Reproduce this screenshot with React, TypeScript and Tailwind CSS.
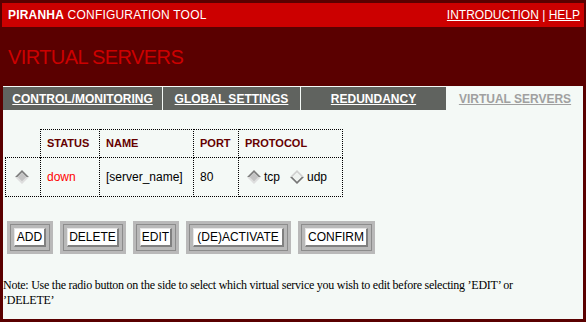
import React from "react";

type DiamondProps = { on?: boolean };

function Diamond({ on = false }: DiamondProps) {
  const top = on ? "#7c7c7c" : "#cfcfcf";
  const bottom = on ? "#dedede" : "#767676";
  const fill = on ? "#c4c4c4" : "#eef2ef";
  return (
    <svg width="14" height="14" viewBox="0 0 14 14" className="shrink-0">
      <polygon points="7,0 14,7 11.5,7 7,2.5 2.5,7 0,7" fill={top} />
      <polygon points="0,7 2.5,7 7,11.5 11.5,7 14,7 7,14" fill={bottom} />
      <polygon points="7,2.5 11.5,7 7,11.5 2.5,7" fill={fill} />
    </svg>
  );
}

const tabs = [
  { label: "CONTROL/MONITORING", w: "w-[159px]" },
  { label: "GLOBAL SETTINGS", w: "w-[137px]" },
  { label: "REDUNDANCY", w: "w-[145px]" },
];

const buttons = [
  { label: "ADD", w: "w-[46px]" },
  { label: "DELETE", w: "w-[66px]" },
  { label: "EDIT", w: "w-[46px]" },
  { label: "(DE)ACTIVATE", w: "w-[105px]" },
  { label: "CONFIRM", w: "w-[77px]" },
];

const cell = "border border-dotted border-black";

export default function App() {
  return (
    <div className="w-[586px] h-[322px] overflow-hidden bg-[#5a0000] pt-[3px] px-[2px] font-['Liberation_Sans',Arial,sans-serif]">
      <div className="h-[24px] bg-[#cc0000] flex items-center justify-between pl-[6px] pr-[4px] text-white text-[12px]">
        <div className="tracking-[0.2px]">
          <span className="font-bold">PIRANHA</span> CONFIGURATION TOOL
        </div>
        <div>
          <span className="underline">INTRODUCTION</span> | <span className="underline">HELP</span>
        </div>
      </div>

      <div className="h-[59px] flex items-center pl-[6px] text-[#cc0000] text-[20px] tracking-[-0.6px]">
        VIRTUAL SERVERS
      </div>

      <div className="mx-px h-[233px] bg-[#f4f9f6] pt-px">
        <div className="flex gap-px h-[23px] text-[12px] font-bold">
          {tabs.map((t) => (
            <div
              key={t.label}
              className={`${t.w} bg-[#60635f] text-white underline flex items-center justify-center`}
            >
              {t.label}
            </div>
          ))}
          <div className="w-[136px] text-[#a0a0a0] underline flex items-center justify-center">
            VIRTUAL SERVERS
          </div>
        </div>

        <table className="ml-[2px] mt-[19px] border-collapse text-[12px] [empty-cells:hide]">
          <thead>
            <tr className="h-[28px] text-[11px] font-bold text-[#660000] text-left">
              <th className="w-[35px] p-0"></th>
              <th className={`${cell} w-[59px] px-[6px] font-bold`}>STATUS</th>
              <th className={`${cell} w-[94px] px-[6px] font-bold`}>NAME</th>
              <th className={`${cell} w-[45px] px-[6px] font-bold`}>PORT</th>
              <th className={`${cell} w-[104px] px-[6px] font-bold`}>PROTOCOL</th>
            </tr>
          </thead>
          <tbody>
            <tr className="h-[39px] text-black">
              <td className={`${cell} pl-[9px]`}>
                <Diamond on />
              </td>
              <td className={`${cell} px-[6px] text-[#ff0000]`}>down</td>
              <td className={`${cell} px-[6px]`}>[server_name]</td>
              <td className={`${cell} px-[6px]`}>80</td>
              <td className={`${cell} px-[8px]`}>
                <div className="flex items-center gap-[3px]">
                  <Diamond on />
                  <span>tcp</span>
                  <span className="w-[4px]" />
                  <Diamond />
                  <span>udp</span>
                </div>
              </td>
            </tr>
          </tbody>
        </table>

        <div className="flex gap-[7px] ml-[4px] mt-[24px]">
          {buttons.map((b) => (
            <div key={b.label} className={`${b.w} h-[33px] bg-[#b9b9b9] p-[3px]`}>
              <div className="h-full border border-[#8c8c8c] p-[3px] flex">
                <div className="flex-1 bg-white border-t border-l border-t-[#e6e6e6] border-l-[#e6e6e6] border-b-2 border-r-2 border-b-[#808080] border-r-[#808080] flex items-center justify-center text-[12px] text-black">
                  {b.label}
                </div>
              </div>
            </div>
          ))}
        </div>

        <p className="mt-[24px] text-[12px] leading-[15px] text-black font-['Liberation_Serif','Times_New_Roman',serif] tracking-[-0.25px]">
          Note: Use the radio button on the side to select which virtual service you wish to edit before selecting ’EDIT’ or
          <br />
          ’DELETE’
        </p>
      </div>
    </div>
  );
}
